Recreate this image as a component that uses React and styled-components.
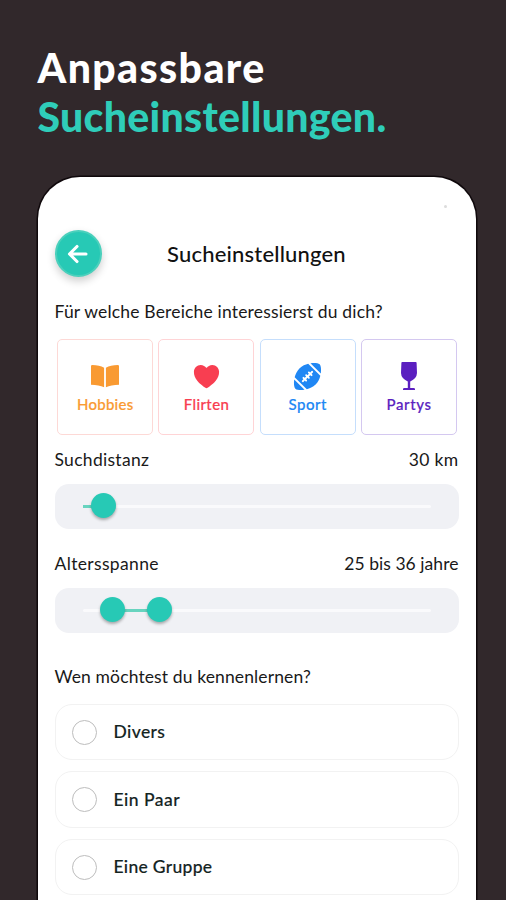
import React from "react";
import styled, { createGlobalStyle } from "styled-components";
import { IoAmericanFootball, IoHeart } from "react-icons/io5";

const GlobalStyle = createGlobalStyle`
  * { box-sizing: border-box; }
  html, body { margin: 0; padding: 0; background: #31282b; }
`;

const Page = styled.div`
  width: 506px;
  height: 900px;
  overflow: hidden;
  background: #31282b;
  font-family: Lato, "Open Sans", sans-serif;
  color: #191919;
  display: flex;
  flex-direction: column;
  padding: 44px 30px 0 37.5px;
`;

const Headline = styled.h1`
  margin: 0;
  flex: 0 0 133px;
  font-size: 41px;
  line-height: 48.5px;
  font-weight: 900;
  color: #fff;
  white-space: nowrap;
`;

const HeadLine = styled.span`
  display: block;
  color: ${(p) => p.$color};
  letter-spacing: ${(p) => p.$spacing}px;
`;

const Phone = styled.main`
  flex: 1 0 730px;
  display: flex;
  flex-direction: column;
  background: #fff;
  border-radius: 42px 42px 0 0;
  box-shadow: 0 0 0 1.5px #0f080b;
  padding: 28px 17.5px 0 17px;
`;

const CameraDot = styled.span`
  align-self: flex-end;
  width: 3px;
  height: 3px;
  margin-right: 12px;
  border-radius: 50%;
  background: #dcdcdc;
`;

const TopBar = styled.header`
  display: grid;
  grid-template-columns: 47px 1fr 47px;
  align-items: center;
  margin-top: 22px;
  height: 47px;
`;

const BackButton = styled.button`
  width: 47px;
  height: 47px;
  padding: 0;
  display: grid;
  place-items: center;
  border: 2.5px solid #4bd0bc;
  border-radius: 50%;
  background: #27c9b5;
  box-shadow: 0 4px 9px rgba(0, 0, 0, 0.2);
`;

const Title = styled.h2`
  margin: 1px 0 0;
  text-align: center;
  font-size: 22px;
  line-height: 28px;
  font-weight: 500;
  color: #111;
  letter-spacing: ${(p) => p.$spacing}px;
`;

const Label = styled.p`
  margin: ${(p) => p.$top || 0}px 0 0;
  font-size: 17.5px;
  line-height: 22px;
  white-space: nowrap;
  letter-spacing: ${(p) => p.$spacing || 0}px;
`;

const Tiles = styled.div`
  display: grid;
  grid-template-columns: repeat(4, 96px);
  column-gap: 5.3px;
  margin: 16px 0 0 2.7px;
`;

const Tile = styled.div`
  height: 96px;
  display: flex;
  flex-direction: column;
  align-items: center;
  padding-top: 21px;
  border: 1.5px solid ${(p) => p.$border};
  border-radius: 5px;
  color: ${(p) => p.$color};
`;

const TileIcon = styled.span`
  display: grid;
  place-items: center;
  height: 30px;
`;

const TileName = styled.span`
  margin-top: 4px;
  font-size: 15px;
  line-height: 19px;
  font-weight: 500;
  -webkit-text-stroke: 0.2px currentColor;
  letter-spacing: ${(p) => p.$spacing}px;
`;

const SettingHead = styled.div`
  display: flex;
  justify-content: space-between;
  margin-top: ${(p) => p.$top}px;
`;

const SliderBox = styled.div`
  height: 45px;
  margin-top: 13px;
  padding: 0 28px;
  display: flex;
  align-items: center;
  border-radius: 14px;
  background: #f0f1f5;
`;

const Track = styled.div`
  position: relative;
  flex: 1;
  height: 3px;
  border-radius: 2px;
  background: #fafafc;
`;

const Range = styled.div`
  position: absolute;
  top: 0;
  left: ${(p) => p.$from}px;
  width: ${(p) => p.$to - p.$from}px;
  height: 3px;
  background: #68d4bf;
`;

const Thumb = styled.div`
  position: absolute;
  top: -12px;
  left: ${(p) => p.$at - 12.5}px;
  width: 25px;
  height: 25px;
  border-radius: 50%;
  background: #27c9b5;
  box-shadow: 0 2px 3px rgba(0, 0, 0, 0.3);
`;

const Options = styled.div`
  display: grid;
  grid-auto-rows: 56.5px;
  row-gap: 11px;
  margin-top: 16px;
`;

const Option = styled.label`
  display: flex;
  align-items: center;
  padding-left: 16px;
  border: 1.5px solid #f2f2f2;
  border-radius: 17px;
`;

const Radio = styled.span`
  width: 25px;
  height: 25px;
  border: 1.5px solid #bdbdbd;
  border-radius: 50%;
`;

const OptionName = styled.span`
  margin-left: 17px;
  font-size: 17.5px;
  line-height: 22px;
  font-weight: 500;
  color: #14241f;
  -webkit-text-stroke: 0.15px currentColor;
  letter-spacing: ${(p) => p.$spacing}px;
`;

const BookIcon = () => (
  <svg width="30" height="24" viewBox="0 0 30 24" fill="currentColor">
    <path d="M1 2.2Q1 1 2.2 1Q9.5 1 14.1 3.8V23.2Q9 21 1 20.8Z" />
    <path d="M29 2.2Q29 1 27.8 1Q20.5 1 15.9 3.8V23.2Q21 21 29 20.8Z" />
  </svg>
);

const GobletIcon = () => (
  <svg width="18" height="30" viewBox="0 0 18 30" fill="currentColor">
    <path d="M2.2 1H15.8Q16.5 1 16.6 1.7L17 12Q16.8 17.5 10.2 20.5V27H13.5Q15 27 15 28V29H3V28Q3 27 4.500 27H7.800V20.500Q1.200 17.500 1 12L1.400 1.700Q1.500 1 2.200 1Z" />
  </svg>
);

const BackArrow = () => (
  <svg width="24" height="22" viewBox="0 0 24 22" fill="none" stroke="#fff" strokeWidth="3.1" strokeLinecap="round" strokeLinejoin="round">
    <path d="M20 11H4M11 3.5L3.5 11L11 18.5" />
  </svg>
);

const interests = [
  { name: "Hobbies", color: "#f99a32", border: "#fdd9d6", icon: <BookIcon />, spacing: 0.25 },
  { name: "Flirten", color: "#f83e51", border: "#ffd4d6", icon: <IoHeart size={31} />, spacing: 0.4 },
  { name: "Sport", color: "#2087f4", border: "#c5defc", icon: <IoAmericanFootball size={31} />, spacing: 0.5 },
  { name: "Partys", color: "#5b1fc0", border: "#d4c8f0", icon: <GobletIcon />, spacing: 0.65 },
];

const groups = [
  { name: "Divers", spacing: 0.4 },
  { name: "Ein Paar", spacing: 0.5 },
  { name: "Eine Gruppe", spacing: 0.3 },
];

export default function App() {
  return (
    <Page>
      <GlobalStyle />
      <Headline>
        <HeadLine $color="#fff" $spacing={1.4}>Anpassbare</HeadLine>
        <HeadLine $color="#2fcdb9" $spacing={0.3}>Sucheinstellungen.</HeadLine>
      </Headline>
      <Phone>
        <CameraDot />
        <TopBar>
          <BackButton aria-label="Zurück"><BackArrow /></BackButton>
          <Title $spacing={0.18}>Sucheinstellungen</Title>
        </TopBar>
        <Label $top={24} $spacing={0.17}>Für welche Bereiche interessierst du dich?</Label>
        <Tiles>
          {interests.map((i) => (
            <Tile key={i.name} $color={i.color} $border={i.border}>
              <TileIcon>{i.icon}</TileIcon>
              <TileName $spacing={i.spacing}>{i.name}</TileName>
            </Tile>
          ))}
        </Tiles>
        <SettingHead $top={14.4}>
          <Label $spacing={0.3}>Suchdistanz</Label>
          <Label $spacing={0.35}>30 km</Label>
        </SettingHead>
        <SliderBox>
          <Track>
            <Range $from={0} $to={20} />
            <Thumb $at={20.5} />
          </Track>
        </SliderBox>
        <SettingHead $top={24}>
          <Label $spacing={0.35}>Altersspanne</Label>
          <Label $spacing={0.05}>25 bis 36 jahre</Label>
        </SettingHead>
        <SliderBox>
          <Track>
            <Range $from={30} $to={77} />
            <Thumb $at={30} />
            <Thumb $at={77} />
          </Track>
        </SliderBox>
        <Label $top={32.6} $spacing={0.12}>Wen möchtest du kennenlernen?</Label>
        <Options>
          {groups.map((g) => (
            <Option key={g.name}>
              <Radio />
              <OptionName $spacing={g.spacing}>{g.name}</OptionName>
            </Option>
          ))}
        </Options>
      </Phone>
    </Page>
  );
}
